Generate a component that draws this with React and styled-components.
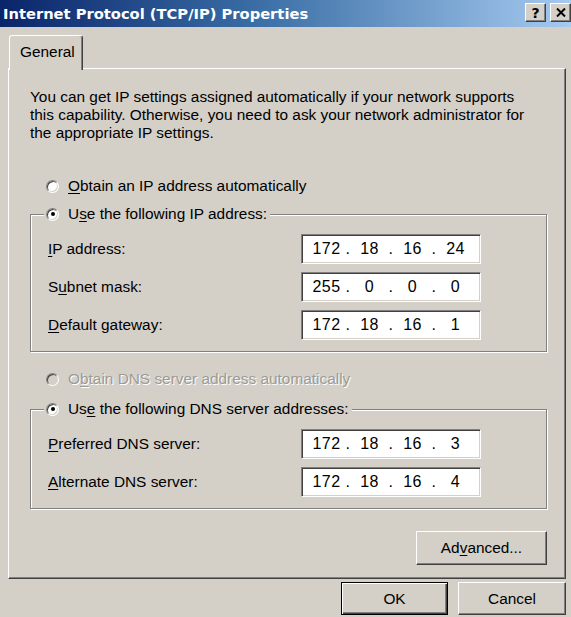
import React from 'react';
import styled, { createGlobalStyle } from 'styled-components';

const Global = createGlobalStyle`
  html, body { margin: 0; padding: 0; background: #d4d0c8; }
  body { font-family: "Liberation Sans", Arial, sans-serif; }
`;

const Window = styled.div`
  width: 571px;
  height: 617px;
  overflow: hidden;
  background: #d4d0c8;
  display: flex;
  flex-direction: column;
  font-family: "Liberation Sans", Arial, sans-serif;
  font-size: 15.4px;
  color: #000;
`;

const TitleBar = styled.div`
  flex: none;
  height: 27px;
  box-sizing: border-box;
  padding-left: 3px;
  display: flex;
  align-items: center;
  justify-content: space-between;
  background: linear-gradient(to right, #0a246a 0%, #3a6ea5 45%, #a6caf0 100%);
`;

const Title = styled.div`
  font-family: "DejaVu Sans", Verdana, sans-serif;
  font-weight: bold;
  font-size: 14.7px;
  color: #fff;
  white-space: nowrap;
`;

const CaptionButtons = styled.div`
  display: flex;
  gap: 4px;
  align-self: flex-start;
  margin-top: 3px;
`;

const CaptionButton = styled.div`
  width: 21px;
  height: 19px;
  box-sizing: border-box;
  background: #d4d0c8;
  border: 1px solid;
  border-color: #fff #404040 #404040 #fff;
  box-shadow: inset -1px -1px #808080;
  display: flex;
  align-items: center;
  justify-content: center;
  font-family: "DejaVu Sans", Verdana, sans-serif;
  font-weight: bold;
  font-size: 14px;
  line-height: 1;
`;

const Body = styled.div`
  padding: 8px 5px 0 8px;
  display: flex;
  flex-direction: column;
`;

const TabStrip = styled.div`
  display: flex;
  padding-left: 1px;
`;

const Tab = styled.div`
  position: relative;
  z-index: 1;
  width: 74px;
  height: 35px;
  margin-bottom: -2px;
  box-sizing: border-box;
  padding: 0 0 2px 10px;
  background: #d4d0c8;
  border: 1px solid;
  border-bottom: none;
  border-color: #fff #404040 transparent #fff;
  border-radius: 3px 3px 0 0;
  box-shadow: inset -1px 0 #808080;
  display: flex;
  align-items: center;
`;

const Panel = styled.div`
  height: 511px;
  box-sizing: border-box;
  padding: 19px 18px 0 21px;
  border: 1px solid;
  border-color: #fff #404040 #404040 #fff;
  box-shadow: inset -1px -1px #808080;
  display: flex;
  flex-direction: column;
`;

const Description = styled.p`
  margin: 0;
  line-height: 18px;
  white-space: nowrap;
`;

const RadioRow = styled.div`
  display: flex;
  align-items: center;
  gap: 9px;
  height: 18px;
  line-height: 18px;
  padding-left: ${p => p.$indent || 0}px;
  margin-top: ${p => p.$top || 0}px;
  color: ${p => (p.$disabled ? '#9c9a96' : '#000')};
  text-shadow: ${p => (p.$disabled ? '1px 1px 0 #fff' : 'none')};
  white-space: nowrap;
`;

const RadioCircle = styled.span`
  flex: none;
  width: 13px;
  height: 13px;
  box-sizing: border-box;
  border-radius: 50%;
  border: 1px solid;
  border-color: #808080 #fff #fff #808080;
  box-shadow: inset 1px 1px #404040, inset -1px -1px #d4d0c8;
  background: ${p => (p.$disabled ? '#d4d0c8' : '#fff')};
  display: flex;
  align-items: center;
  justify-content: center;
`;

const RadioDot = styled.span`
  width: 4px;
  height: 4px;
  border-radius: 50%;
  background: #000;
`;

const Group = styled.fieldset`
  margin: ${p => p.$top || 0}px 0 0 0;
  min-width: 0;
  padding: 11px 16px 11px 17px;
  border: 1px solid #808080;
  box-shadow: inset 1px 1px #fff, 1px 1px #fff;
  display: flex;
  flex-direction: column;
  gap: 8px;
`;

const Legend = styled.legend`
  margin-left: -4px;
  padding: 0 3px 0 2px;
  background: #d4d0c8;
`;

const FieldRow = styled.div`
  display: flex;
  align-items: center;
  height: 30px;
`;

const FieldLabel = styled.div`
  width: 253px;
  flex: none;
  white-space: nowrap;
`;

const IpBox = styled.div`
  width: 180px;
  height: 30px;
  box-sizing: border-box;
  padding-left: 8px;
  background: #fff;
  border: 1px solid;
  border-color: #808080 #fff #fff #808080;
  box-shadow: inset 1px 1px #404040, inset -1px -1px #d4d0c8;
  display: grid;
  grid-template-columns: 33px 10px 33px 10px 33px 10px 33px;
  align-items: center;
  font-size: 16px;
  letter-spacing: 0.4px;
`;

const Octet = styled.span`
  text-align: center;
`;

const Dot = styled.span`
  text-align: center;
`;

const Button = styled.button`
  font-family: "Liberation Sans", Arial, sans-serif;
  font-size: 15.4px;
  color: #000;
  width: ${p => p.$w}px;
  height: ${p => p.$h || 33}px;
  box-sizing: border-box;
  padding: 0;
  background: #d4d0c8;
  border: 1px solid;
  border-color: ${p => (p.$default ? '#000' : '#fff #404040 #404040 #fff')};
  box-shadow: ${p =>
    p.$default
      ? 'inset 1px 1px #fff, inset -1px -1px #404040, inset -2px -2px #808080'
      : 'inset -1px -1px #808080'};
`;

const AdvancedRow = styled.div`
  display: flex;
  justify-content: flex-end;
  margin-top: 22px;
`;

const ButtonRow = styled.div`
  display: flex;
  justify-content: flex-end;
  gap: 10px;
  margin-top: 3px;
`;

const U = styled.span`
  text-decoration: underline;
  text-underline-offset: 2px;
`;

function Radio({ checked, disabled }) {
  return (
    <RadioCircle $disabled={disabled}>{checked && <RadioDot />}</RadioCircle>
  );
}

function IpField({ value }) {
  const parts = value.split('.');
  return (
    <IpBox>
      {parts.map((p, i) => (
        <React.Fragment key={i}>
          <Octet>{p}</Octet>
          {i < parts.length - 1 && <Dot>.</Dot>}
        </React.Fragment>
      ))}
    </IpBox>
  );
}

export default function App() {
  return (
    <Window>
      <Global />
      <TitleBar>
        <Title>Internet Protocol (TCP/IP) Properties</Title>
        <CaptionButtons>
          <CaptionButton>?</CaptionButton>
          <CaptionButton>
            <svg width="10" height="9" viewBox="0 0 10 9">
              <path d="M1 0.5 L9 8.5 M9 0.5 L1 8.5" stroke="#000" strokeWidth="2" fill="none" />
            </svg>
          </CaptionButton>
        </CaptionButtons>
      </TitleBar>
      <Body>
        <TabStrip>
          <Tab>General</Tab>
        </TabStrip>
        <Panel>
          <Description>
            You can get IP settings assigned automatically if your network supports
            <br />
            this capability. Otherwise, you need to ask your network administrator for
            <br />
            the appropriate IP settings.
          </Description>

          <RadioRow $indent={16} $top={35}>
            <Radio />
            <span>
              <U>O</U>btain an IP address automatically
            </span>
          </RadioRow>

          <Group $top={10}>
            <Legend>
              <RadioRow>
                <Radio checked />
                <span>
                  U<U>s</U>e the following IP address:
                </span>
              </RadioRow>
            </Legend>
            <FieldRow>
              <FieldLabel>
                <U>I</U>P address:
              </FieldLabel>
              <IpField value="172.18.16.24" />
            </FieldRow>
            <FieldRow>
              <FieldLabel>
                S<U>u</U>bnet mask:
              </FieldLabel>
              <IpField value="255.0.0.0" />
            </FieldRow>
            <FieldRow>
              <FieldLabel>
                <U>D</U>efault gateway:
              </FieldLabel>
              <IpField value="172.18.16.1" />
            </FieldRow>
          </Group>

          <RadioRow $indent={16} $top={18} $disabled>
            <Radio disabled />
            <span>
              O<U>b</U>tain DNS server address automatically
            </span>
          </RadioRow>

          <Group $top={12}>
            <Legend>
              <RadioRow>
                <Radio checked />
                <span>
                  Us<U>e</U> the following DNS server addresses:
                </span>
              </RadioRow>
            </Legend>
            <FieldRow>
              <FieldLabel>
                <U>P</U>referred DNS server:
              </FieldLabel>
              <IpField value="172.18.16.3" />
            </FieldRow>
            <FieldRow>
              <FieldLabel>
                <U>A</U>lternate DNS server:
              </FieldLabel>
              <IpField value="172.18.16.4" />
            </FieldRow>
          </Group>

          <AdvancedRow>
            <Button $w={131} $h={34}>
              Ad<U>v</U>anced...
            </Button>
          </AdvancedRow>
        </Panel>
        <ButtonRow>
          <Button $w={107} $default>
            OK
          </Button>
          <Button $w={108}>Cancel</Button>
        </ButtonRow>
      </Body>
    </Window>
  );
}
